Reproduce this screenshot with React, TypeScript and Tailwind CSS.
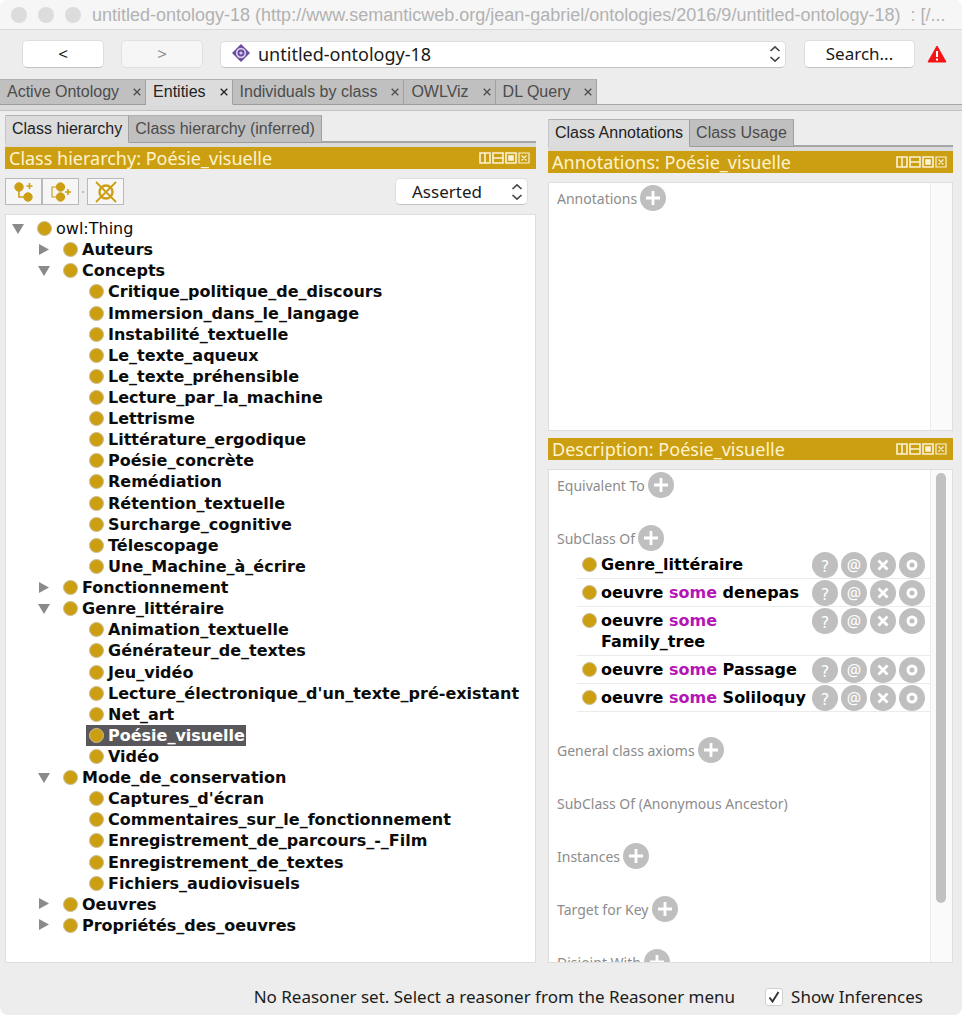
import { useState } from "react";
import type { ReactNode } from "react";

const UI = "font-['Noto_Sans','Liberation_Sans',sans-serif]";

type Node = { label: string; level: number; open?: boolean; branch?: boolean; plain?: boolean };

const leaf = (label: string): Node => ({ label, level: 2 });

const nodes: Node[] = [
  { label: "owl:Thing", level: 0, branch: true, open: true, plain: true },
  { label: "Auteurs", level: 1, branch: true },
  { label: "Concepts", level: 1, branch: true, open: true },
  leaf("Critique_politique_de_discours"),
  leaf("Immersion_dans_le_langage"),
  leaf("Instabilité_textuelle"),
  leaf("Le_texte_aqueux"),
  leaf("Le_texte_préhensible"),
  leaf("Lecture_par_la_machine"),
  leaf("Lettrisme"),
  leaf("Littérature_ergodique"),
  leaf("Poésie_concrète"),
  leaf("Remédiation"),
  leaf("Rétention_textuelle"),
  leaf("Surcharge_cognitive"),
  leaf("Télescopage"),
  leaf("Une_Machine_à_écrire"),
  { label: "Fonctionnement", level: 1, branch: true },
  { label: "Genre_littéraire", level: 1, branch: true, open: true },
  leaf("Animation_textuelle"),
  leaf("Générateur_de_textes"),
  leaf("Jeu_vidéo"),
  leaf("Lecture_électronique_d'un_texte_pré-existant"),
  leaf("Net_art"),
  leaf("Poésie_visuelle"),
  leaf("Vidéo"),
  { label: "Mode_de_conservation", level: 1, branch: true, open: true },
  leaf("Captures_d'écran"),
  leaf("Commentaires_sur_le_fonctionnement"),
  leaf("Enregistrement_de_parcours_-_Film"),
  leaf("Enregistrement_de_textes"),
  leaf("Fichiers_audiovisuels"),
  { label: "Oeuvres", level: 1, branch: true },
  { label: "Propriétés_des_oeuvres", level: 1, branch: true },
];

const indents = ["pl-[3px]", "pl-[29px]", "pl-[55px]"];

function ClassDot() {
  return <span className="size-[15px] shrink-0 rounded-full border border-[#c9bd94] bg-[#cc9f12]" />;
}

function Chevrons() {
  return (
    <svg viewBox="0 0 12 18" className="pointer-events-none absolute right-[5px] top-1/2 h-[18px] w-3 -translate-y-1/2" fill="none" stroke="#444" strokeWidth="1.600">
      <path d="M1.500 6 6 1.800l4.500 4.200M1.500 12 6 16.200l4.500-4.200" />
    </svg>
  );
}

function Tab({ label, active, closable }: { label: string; active?: boolean; closable?: boolean }) {
  return (
    <div
      className={`flex items-center border-b border-r border-r-[#a0a0a0] border-t border-t-[#b2b2b2] font-['Liberation_Sans',sans-serif] text-base leading-5 ${
        active ? "border-b-[#dcdcdc] bg-[#dcdcdc] text-[#222]" : "border-b-[#9c9c9c] bg-[#c0c0c0] text-[#4c4c4c]"
      }`}
    >
      <button type="button" className={`whitespace-nowrap ${closable ? "pl-[7px] pr-3.5" : "px-1.5"}`}>{label}</button>
      {closable && (
        <button type="button" aria-label={`Close ${label}`} className="pr-1">
          <svg viewBox="0 0 8 8" className="size-2" stroke="currentColor" strokeWidth="1.300">
            <path d="M.7.7l6.600 6.600M7.300.7.7 7.300" />
          </svg>
        </button>
      )}
    </div>
  );
}

function TabStrip({ children }: { children: ReactNode }) {
  return (
    <div className="flex h-7 border-l border-[#c4c4c4]">
      {children}
      <div className="flex-1 border-b-2 border-[#a6a6a6]" />
    </div>
  );
}

function PanelHeader({ title }: { title: string }) {
  const glyphs = [
    <path key="a" d="M1 1h10v10H1zM6 1v10" />,
    <path key="b" d="M1 1h10v10H1zM1 6h10" />,
    <g key="c"><path d="M1 1h10v10H1z" /><path d="M4 4h4v4H4z" fill="#fbf3d5" /></g>,
    <path key="d" strokeWidth="1.200" d="M1 1h10v10H1zM3.500 3.500l5 5M8.500 3.500l-5 5" />,
  ];
  const names = ["Split vertically", "Split horizontally", "Float", "Close"];
  return (
    <div className={`flex h-[22px] items-center justify-between bg-[#cc9f12] pl-1 pr-1.5 text-[#fff3cc] ${UI}`}>
      <h2 className="whitespace-nowrap text-lg leading-5">{title}</h2>
      <div className="flex gap-px">
        {glyphs.map((g, i) => (
          <button key={i} type="button" aria-label={names[i]}>
            <svg viewBox="0 0 12 12" className="size-3" fill="none" stroke="#fbf3d5" strokeWidth="1.600">{g}</svg>
          </button>
        ))}
      </div>
    </div>
  );
}

function RoundButton({ label, children }: { label: string; children: ReactNode }) {
  return (
    <button type="button" aria-label={label} className="flex size-[26px] shrink-0 items-center justify-center rounded-full bg-[#bfbfbf] text-base leading-none text-white">
      {children}
    </button>
  );
}

function Section({ title, add = true, children }: { title: string; add?: boolean; children?: ReactNode }) {
  return (
    <section className="shrink-0">
      <div className={`flex h-[27px] items-center gap-[3px] pl-2 text-[#8c8c8c] ${UI}`}>
        <h3 className="pt-[3px] text-sm leading-4">{title}</h3>
        {add && (
          <RoundButton label={`Add to ${title}`}>
            <svg viewBox="0 0 14 14" className="size-3.5" stroke="#fff" strokeWidth="2.800"><path d="M7 0v14M0 7h14" /></svg>
          </RoundButton>
        )}
      </div>
      {children}
    </section>
  );
}

function AxiomRow({ children }: { children: ReactNode }) {
  return (
    <li className="ml-7 flex items-start justify-between border-b border-[#ebebeb] pr-[5px]">
      <div className="flex min-w-0 py-[3px] pl-[5px]">
        <span className="flex h-[21px] items-center"><ClassDot /></span>
        <p className="w-[212px] pl-1 text-base font-bold leading-[21px] text-black">{children}</p>
      </div>
      <div className="flex gap-[3px] pt-px">
        <RoundButton label="Explain"><span className="pt-1">?</span></RoundButton>
        <RoundButton label="Annotate"><span className="font-['Noto_Sans',sans-serif]">@</span></RoundButton>
        <RoundButton label="Delete">
          <svg viewBox="0 0 12 12" className="size-3" stroke="#fff" strokeWidth="2.800"><path d="m1.500 1.500 9 9M10.500 1.500l-9 9" /></svg>
        </RoundButton>
        <RoundButton label="Edit">
          <svg viewBox="0 0 12 12" className="size-3" fill="none" stroke="#fff" strokeWidth="3"><circle cx="6" cy="6" r="4" /></svg>
        </RoundButton>
      </div>
    </li>
  );
}

const Some = () => <span className="text-[#b515b5]">some</span>;

const toolButton = "flex h-[27px] w-[37px] items-center justify-center border border-[#b9b9b9] bg-[#f6f6f6]";
const field = "appearance-none rounded-[5px] border border-[#dedede] border-b-[#c2c2c2] bg-white text-[#1a1a1a]";

export default function App() {
  const [selected, setSelected] = useState("Poésie_visuelle");
  const [inferences, setInferences] = useState(true);

  return (
    <div className="bg-white">
      <div className="flex min-h-screen flex-col overflow-hidden rounded-lg bg-[#ededed] font-['DejaVu_Sans',sans-serif]">
        <header className="flex h-[30px] items-center gap-[11px] overflow-hidden border-b border-[#dadada] bg-[#f6f6f6] pl-[11px]">
          <span className="size-4 shrink-0 rounded-full bg-[#dcdcdc]" />
          <span className="size-4 shrink-0 rounded-full bg-[#dcdcdc]" />
          <span className="size-4 shrink-0 rounded-full bg-[#dcdcdc]" />
          <h1 className="whitespace-pre font-['Liberation_Sans',sans-serif] text-lg text-[#b2b2b2]">
            {"untitled-ontology-18 (http://www.semanticweb.org/jean-gabriel/ontologies/2016/9/untitled-ontology-18)  : [/..."}
          </h1>
        </header>

        <div className={`flex h-[49px] items-center pb-px pl-[22px] pr-[15px] text-[17px] ${UI}`}>
          <button type="button" className={`${field} mr-[17px] h-7 w-[82px] leading-6`}>&lt;</button>
          <button type="button" disabled className="mr-[17px] h-7 w-[82px] rounded-[5px] border border-[#e0e0e0] bg-[#f6f6f6] leading-6 text-[#8d8d8d]">&gt;</button>
          <div className="relative mr-[18px] flex-1">
            <select aria-label="Active ontology" className={`${field} h-[27px] w-full pl-[37px] text-lg leading-6`}>
              <option>untitled-ontology-18</option>
            </select>
            <svg viewBox="0 0 18 18" className="pointer-events-none absolute left-3 top-[3px] size-[18px]">
              <path d="M9 0 18 9 9 18 0 9Z" fill="#6a4a9c" />
              <circle cx="9" cy="9" r="4.300" fill="#6a4a9c" stroke="#d9cdee" strokeWidth="1.700" />
              <circle cx="9" cy="9" r="1.600" fill="#d9cdee" />
            </svg>
            <Chevrons />
          </div>
          <button type="button" className={`${field} mr-3 h-7 w-[111px] leading-6`}>Search...</button>
          <svg viewBox="0 0 20 18" className="h-[18px] w-5" role="img" aria-label="Warning">
            <path d="M10 1 19 17H1Z" fill="#f51414" stroke="#f51414" strokeLinejoin="round" />
            <path d="M10 6v6M10 13.500v2" stroke="#fff" strokeWidth="2" />
          </svg>
        </div>

        <nav className="flex h-[26px]">
          <Tab label="Active Ontology" closable />
          <Tab label="Entities" active closable />
          <Tab label="Individuals by class" closable />
          <Tab label="OWLViz" closable />
          <Tab label="DL Query" closable />
          <div className="flex-1 border-b border-[#a6a6a6]" />
        </nav>
        <div className="h-1.5 border-b border-[#c2c2c2] bg-[#dadada]" />

        <main className="grid flex-1 grid-cols-[minmax(0,531fr)_minmax(0,405fr)] gap-3 pl-[5px] pr-[9px]">
          <div className="flex flex-col pt-1">
            <TabStrip>
              <Tab label="Class hierarchy" active />
              <Tab label="Class hierarchy (inferred)" />
            </TabStrip>
            <div className="h-1 bg-[#dadada]" />
            <PanelHeader title="Class hierarchy: Poésie_visuelle" />
            <div className="flex h-[45px] items-center justify-between pr-2">
              <div className="flex items-center">
                <button type="button" aria-label="Add subclass" className={toolButton}>
                  <svg viewBox="0 0 20 20" className="size-5" fill="#cc9f12" stroke="#cc9f12">
                    <circle cx="5" cy="5" r="4.200" /><circle cx="14" cy="15" r="4.200" />
                    <path d="M5 8v7h6M15.500 1v6M12.500 4h6" fill="none" strokeWidth="1.600" />
                  </svg>
                </button>
                <button type="button" aria-label="Add sibling class" className={toolButton}>
                  <svg viewBox="0 0 22 20" className="h-5 w-[22px]" fill="#cc9f12" stroke="#cc9f12">
                    <circle cx="10.500" cy="5" r="4.200" /><circle cx="10.500" cy="15" r="4.200" />
                    <path d="M7 5H2v10h5" fill="none" strokeWidth="1.200" />
                    <path d="M18 7v6M15 10h6" strokeWidth="1.600" />
                  </svg>
                </button>
                <span className="mx-[3px] size-0.5 rounded-full bg-[#b0b0b0]" />
                <button type="button" aria-label="Delete class" className={toolButton}>
                  <svg viewBox="0 0 22 22" className="size-[22px]" fill="none" stroke="#cc9f12" strokeWidth="1.800">
                    <circle cx="11" cy="11" r="6.500" strokeWidth="2.400" />
                    <path d="m1 1 20 20M21 1 1 21" />
                  </svg>
                </button>
              </div>
              <div className="relative">
                <select aria-label="Hierarchy mode" className={`${field} h-[27px] w-[133px] pl-4 text-[17px] leading-6 ${UI}`}>
                  <option>Asserted</option>
                  <option>Inferred</option>
                </select>
                <Chevrons />
              </div>
            </div>
            <div className="flex flex-1 flex-col border border-[#dedede] bg-white pb-[26px] pt-[3px]">
              <ul role="tree" aria-label="Class hierarchy" className="grid flex-1 auto-rows-[minmax(21px,1fr)]">
                {nodes.map((n) => {
                  const on = n.label === selected;
                  return (
                    <li key={n.label} role="treeitem" aria-selected={on} aria-level={n.level + 1} className={`flex ${indents[n.level]}`}>
                      <span className="flex w-[25px] shrink-0 items-center pl-[3px]">
                        {n.branch && (
                          <svg viewBox="0 0 12 12" className="size-3" fill="#8a8a8a">
                            <path d={n.open ? "M0 1h12L6 11Z" : "M1 0v11l10-5.500Z"} />
                          </svg>
                        )}
                      </span>
                      <button
                        type="button"
                        onClick={() => setSelected(n.label)}
                        className={`flex items-center gap-1 whitespace-nowrap pl-[3px] pr-px text-base leading-[21px] ${n.plain ? "" : "font-bold"} ${on ? "bg-[#58585c] text-white" : "text-[#0c0c0c]"}`}
                      >
                        <ClassDot />
                        <span>{n.label}</span>
                      </button>
                    </li>
                  );
                })}
              </ul>
            </div>
          </div>

          <div className="flex flex-col pt-2">
            <TabStrip>
              <Tab label="Class Annotations" active />
              <Tab label="Class Usage" />
            </TabStrip>
            <div className="h-1 bg-[#dadada]" />
            <PanelHeader title="Annotations: Poésie_visuelle" />
            <div className="mt-[9px] flex h-[249px] border border-[#dedede] bg-white">
              <div className="flex-1 pt-px"><Section title="Annotations" /></div>
              <div className="w-[22px] border-l border-[#ececec] bg-[#fafafa]" />
            </div>
            <div className="mt-[7px]"><PanelHeader title="Description: Poésie_visuelle" /></div>
            <div className="mt-[9px] flex min-h-0 flex-1 basis-0 border border-[#dedede] bg-white">
              <div className="flex min-w-0 flex-1 flex-col gap-[26px] overflow-y-auto pt-px [scrollbar-width:none]">
                <Section title="Equivalent To" />
                <Section title="SubClass Of">
                  <ul className="-mb-0.5">
                    <AxiomRow>Genre_littéraire</AxiomRow>
                    <AxiomRow>oeuvre <Some /> denepas</AxiomRow>
                    <AxiomRow>oeuvre <Some /> Family_tree</AxiomRow>
                    <AxiomRow>oeuvre <Some /> Passage</AxiomRow>
                    <AxiomRow>oeuvre <Some /> Soliloquy</AxiomRow>
                  </ul>
                </Section>
                <Section title="General class axioms" />
                <Section title="SubClass Of (Anonymous Ancestor)" add={false} />
                <Section title="Instances" />
                <Section title="Target for Key" />
                <Section title="Disjoint With" />
              </div>
              <div className="w-[22px] border-l border-[#ececec] bg-[#fafafa] px-[5px] pt-[3px]">
                <div className="h-[88%] w-2.5 rounded-full bg-[#c1c1c1]" />
              </div>
            </div>
          </div>
        </main>

        <footer className={`flex h-[52px] items-center justify-end pr-[39px] pt-4 text-[17px] leading-6 text-[#1c1c1c] ${UI}`}>
          <span className="mr-[30px]">No Reasoner set. Select a reasoner from the Reasoner menu</span>
          <label className="flex items-center gap-2">
            <span className="relative flex size-[18px]">
              <input
                type="checkbox"
                checked={inferences}
                onChange={(e) => setInferences(e.target.checked)}
                className="peer size-[18px] appearance-none rounded-[3px] border border-[#cfcfcf] bg-white"
              />
              <svg viewBox="0 0 18 18" className="pointer-events-none absolute inset-0 hidden size-[18px] peer-checked:block" fill="none" stroke="#333" strokeWidth="1.900">
                <path d="m4.500 9.500 3 4 6-9.500" />
              </svg>
            </span>
            Show Inferences
          </label>
        </footer>
      </div>
    </div>
  );
}
